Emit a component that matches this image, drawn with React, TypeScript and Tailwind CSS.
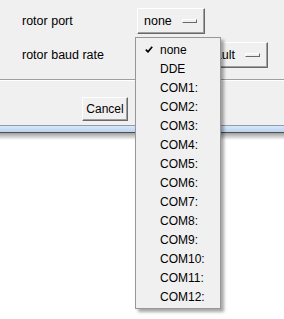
const ports = [
  "none",
  "DDE",
  "COM1:",
  "COM2:",
  "COM3:",
  "COM4:",
  "COM5:",
  "COM6:",
  "COM7:",
  "COM8:",
  "COM9:",
  "COM10:",
  "COM11:",
  "COM12:",
];

function Indicator() {
  return (
    <span className="block w-[15px] h-[4px] shrink-0 border border-t-white border-l-white border-b-[#696969] border-r-[#696969] bg-[#f0f0f0]" />
  );
}

function MenuButton({ label }: { label: string }) {
  return (
    <div className="flex items-center gap-[10px] h-[26px] pl-[6px] pr-[7px] border border-t-white border-l-white border-b-[#696969] border-r-[#696969] shadow-[inset_-1px_-1px_0_#a0a0a0] bg-[#f0f0f0]">
      <span>{label}</span>
      <Indicator />
    </div>
  );
}

export default function App() {
  return (
    <div className="relative w-[284px] h-[319px] overflow-hidden bg-white text-[12px] text-black font-['Liberation_Sans',Arial,sans-serif]">
      {/* dialog body */}
      <div className="h-[125px] bg-[#f0f0f0] flex flex-col">
        <div className="pt-[8px] pl-[22px] w-[268px] flex flex-col gap-[8px] text-[12.5px]">
          <div className="flex items-center">
            <span className="w-[115px]">rotor port</span>
            <MenuButton label="none" />
          </div>
          <div className="flex items-center">
            <span>rotor baud rate</span>
            <div className="ml-auto">
              <MenuButton label="default" />
            </div>
          </div>
        </div>

        <div className="mt-[11px] h-[2px] border-t border-t-[#a0a0a0] border-b border-b-white" />

        <div className="mt-[16px] ml-[82px]">
          <button className="w-[46px] h-[24px] flex items-center justify-center border border-t-white border-l-white border-b-[#696969] border-r-[#696969] shadow-[inset_-1px_-1px_0_#a0a0a0] bg-[#f0f0f0]">
            Cancel
          </button>
        </div>
      </div>

      {/* window frame bottom */}
      <div className="h-[1px] bg-[#8f9bab]" />
      <div className="h-[6px] bg-linear-to-b from-[#d9e7f8] to-[#bcd3ee]" />
      <div className="h-[1px] bg-[#4f4f4f]" />
      <div className="h-[7px] bg-linear-to-b from-[#a0a0a0] to-white" />

      {/* open dropdown */}
      <div className="absolute left-[135px] top-[37px] w-[86px] py-[2px] border border-[#979797] bg-[#f0f0f0] shadow-[3px_3px_3px_rgba(0,0,0,0.35)]">
        {ports.map((p, i) => (
          <div key={p} className="relative h-[19px] flex items-center pl-[24px]">
            {i === 0 && (
              <svg
                className="absolute left-[9px] top-[6px]"
                width="8"
                height="7"
                viewBox="0 0 8 7"
              >
                <path d="M0.8 3.6 L3 5.8 L7.2 0.8" fill="none" stroke="#000" strokeWidth="1.7" />
              </svg>
            )}
            <span>{p}</span>
          </div>
        ))}
      </div>
    </div>
  );
}
